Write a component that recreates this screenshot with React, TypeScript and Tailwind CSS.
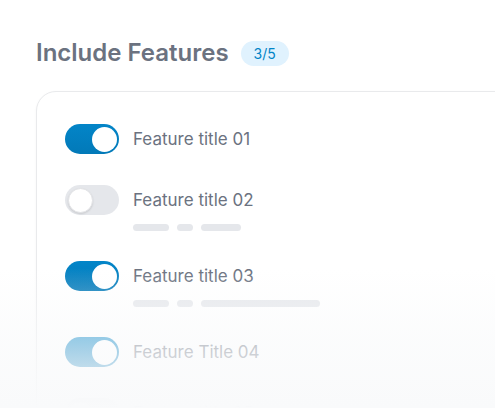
import React from "react";

interface Feature {
    title: string;
    enabled: boolean;
    bars?: number[];
}

const features: Feature[] = [
    { title: "Feature title 01", enabled: true },
    { title: "Feature title 02", enabled: false, bars: [36, 16, 40] },
    { title: "Feature title 03", enabled: true, bars: [36, 16, 119] },
    { title: "Feature Title 04", enabled: true },
    { title: "Feature title 05", enabled: false },
];

const Toggle: React.FC<{ on: boolean }> = ({ on }) => (
    <div
        className={
            on
                ? "flex h-[30px] w-[54px] shrink-0 items-center justify-end rounded-full bg-gradient-to-b from-[#0385c8] to-[#0279b8] p-[2.5px]"
                : "flex h-[30px] w-[54px] shrink-0 items-center justify-start rounded-full bg-[#e5e7eb] p-[2.5px]"
        }
    >
        <div
            className={
                on
                    ? "h-[25px] w-[25px] rounded-full bg-white"
                    : "h-[25px] w-[25px] rounded-full bg-white border border-[#e2e3e6] shadow-[0_1px_2px_rgba(0,0,0,0.12)]"
            }
        />
    </div>
);

export default function App() {
    return (
        <div
            className="relative h-[408px] w-[495px] overflow-hidden bg-white"
            style={{ fontFamily: "Inter, 'Noto Sans', sans-serif" }}
        >
            <div className="flex items-center gap-3 pl-9 pt-[37px]">
                <h2 className="text-[24px] font-semibold leading-8 text-[#6b7280]">Include Features</h2>
                <span className="flex h-[25px] w-12 items-center justify-center rounded-full bg-[#e0f2fe] text-[14px] text-[#0284c7]">
                    3/5
                </span>
            </div>

            <div className="ml-9 mt-[22px] w-[520px] rounded-[20px] border border-[#e9eaec] bg-white pl-7 pt-8 shadow-[0_1px_3px_rgba(0,0,0,0.04)]">
                <div className="flex flex-col gap-[30px]">
                    {features.map((f) => (
                        <div key={f.title} className="flex items-start gap-[14px]">
                            <Toggle on={f.enabled} />
                            <div className="flex flex-col">
                                <span className="text-[17px] leading-[31px] text-[#6b7280]">{f.title}</span>
                                {f.bars && (
                                    <div className="mt-[8px] flex gap-2">
                                        {f.bars.map((w, i) => (
                                            <div
                                                key={i}
                                                className="h-[7px] rounded-full bg-[#e5e7eb]"
                                                style={{ width: w }}
                                            />
                                        ))}
                                    </div>
                                )}
                            </div>
                        </div>
                    ))}
                </div>
            </div>

            <div className="pointer-events-none absolute inset-x-0 bottom-0 h-[140px] bg-gradient-to-b from-[#f9fafb]/0 via-[#f9fafb]/60 to-[#f9fafb]" />
        </div>
    );
}
